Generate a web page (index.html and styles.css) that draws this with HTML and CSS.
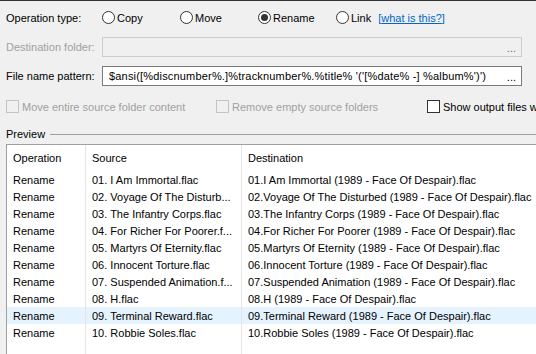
FILE: index.html
```html
<!DOCTYPE html>
<html lang="en">
<head>
    <meta charset="UTF-8">
    <title>File operations</title>
    <link rel="stylesheet" href="styles.css">
</head>
<body>
    <div class="options">
        <div class="row row-type">
            <span class="label">Operation type:</span>
            <span class="radio-item"><span class="radio"></span>Copy</span>
            <span class="radio-item"><span class="radio"></span>Move</span>
            <span class="radio-item"><span class="radio checked"></span>Rename</span>
            <span class="radio-item last"><span class="radio"></span>Link</span>
            <span class="help">[<a href="#">what is this?</a>]</span>
        </div>
        <div class="row row-field row-dest">
            <span class="label disabled">Destination folder:</span>
            <div class="field field-disabled">
                <span class="field-text"></span>
                <span class="dots">...</span>
            </div>
        </div>
        <div class="row row-field row-pattern">
            <span class="label">File name pattern:</span>
            <div class="field">
                <span class="field-text pattern">$ansi([%discnumber%.]%tracknumber%.%title% '('[%date% -] %album%')')</span>
                <span class="dots">...</span>
            </div>
        </div>
        <div class="row checks">
            <span class="check disabled"><span class="box"></span>Move entire source folder content</span>
            <span class="check disabled"><span class="box"></span>Remove empty source folders</span>
            <span class="check"><span class="box"></span>Show output files w</span>
        </div>
        <div class="row group-title">Preview</div>

        <div class="list">
            <div class="list-row list-head">
                <span class="cell">Operation</span>
                <span class="cell">Source</span>
                <span class="cell">Destination</span>
            </div>
            <div class="list-row">
                <span class="cell">Rename</span>
                <span class="cell">01. I Am Immortal.flac</span>
                <span class="cell">01.I Am Immortal (1989 - Face Of Despair).flac</span>
            </div>
            <div class="list-row">
                <span class="cell">Rename</span>
                <span class="cell">02. Voyage Of The Disturb...</span>
                <span class="cell">02.Voyage Of The Disturbed (1989 - Face Of Despair).flac</span>
            </div>
            <div class="list-row">
                <span class="cell">Rename</span>
                <span class="cell">03. The Infantry Corps.flac</span>
                <span class="cell">03.The Infantry Corps (1989 - Face Of Despair).flac</span>
            </div>
            <div class="list-row">
                <span class="cell">Rename</span>
                <span class="cell">04. For Richer For Poorer.f...</span>
                <span class="cell">04.For Richer For Poorer (1989 - Face Of Despair).flac</span>
            </div>
            <div class="list-row">
                <span class="cell">Rename</span>
                <span class="cell">05. Martyrs Of Eternity.flac</span>
                <span class="cell">05.Martyrs Of Eternity (1989 - Face Of Despair).flac</span>
            </div>
            <div class="list-row">
                <span class="cell">Rename</span>
                <span class="cell">06. Innocent Torture.flac</span>
                <span class="cell">06.Innocent Torture (1989 - Face Of Despair).flac</span>
            </div>
            <div class="list-row">
                <span class="cell">Rename</span>
                <span class="cell">07. Suspended Animation.f...</span>
                <span class="cell">07.Suspended Animation (1989 - Face Of Despair).flac</span>
            </div>
            <div class="list-row">
                <span class="cell">Rename</span>
                <span class="cell">08. H.flac</span>
                <span class="cell">08.H (1989 - Face Of Despair).flac</span>
            </div>
            <div class="list-row hover">
                <span class="cell">Rename</span>
                <span class="cell">09. Terminal Reward.flac</span>
                <span class="cell">09.Terminal Reward (1989 - Face Of Despair).flac</span>
            </div>
            <div class="list-row">
                <span class="cell">Rename</span>
                <span class="cell">10. Robbie Soles.flac</span>
                <span class="cell">10.Robbie Soles (1989 - Face Of Despair).flac</span>
            </div>
            <div class="list-row list-fill">
                <span class="cell"></span>
                <span class="cell"></span>
                <span class="cell"></span>
            </div>
        </div>
    </div>
</body>
</html>
```
FILE: styles.css
```css
html, body {
    height: 100%;
}
body {
    margin: 0;
    overflow: hidden;
    box-sizing: border-box;
    border-top: 1px solid #333;
    background-color: #f0f0f0;
    font-family: "Liberation Sans", Arial, sans-serif;
    font-size: 11px;
    color: #000;
}
.options {
    padding: 7px 0 0 6px;
}
.row {
    display: flex;
    align-items: center;
    white-space: nowrap;
}
.label {
    width: 96px;
    flex: none;
}
.disabled {
    color: #a0a0a0;
}

/* operation type */
.row-type {
    height: 19px;
}
.radio-item {
    display: flex;
    align-items: center;
    gap: 2px;
    width: 78px;
}
.radio-item.last {
    width: auto;
}
.radio {
    display: flex;
    align-items: center;
    justify-content: center;
    width: 13px;
    height: 13px;
    box-sizing: border-box;
    border: 1px solid #333;
    border-radius: 50%;
    background-color: #fff;
}
.radio.checked::after {
    content: "";
    width: 7px;
    height: 7px;
    border-radius: 50%;
    background-color: #333;
}
.help {
    margin-left: 7px;
    color: #0066cc;
}
.help a {
    color: #0066cc;
}

/* text fields */
.row-field {
    height: 20px;
}
.row-dest {
    margin-top: 10px;
}
.row-pattern {
    margin-top: 9px;
}
.field {
    display: flex;
    align-items: center;
    width: 420px;
    height: 20px;
    padding: 0 5px 0 6px;
    box-sizing: border-box;
    border: 1px solid #7a7a7a;
    background-color: #fff;
}
.field-disabled {
    border-color: #cccccc;
    background-color: #f0f0f0;
}
.field-disabled .dots {
    color: #6d6d6d;
}
.field-text {
    flex: 1;
    overflow: hidden;
}
.pattern {
    letter-spacing: 0.18px;
}
.dots {
    margin-left: 6px;
    padding-top: 2px;
}

/* checkboxes */
.checks {
    display: grid;
    grid-template-columns: 210px 211px auto;
    height: 13px;
    margin-top: 14px;
}
.check {
    display: flex;
    align-items: center;
    gap: 3px;
}
.box {
    width: 13px;
    height: 13px;
    flex: none;
    box-sizing: border-box;
    border: 1px solid #333;
    background-color: #fff;
}
.check.disabled .box {
    border-color: #c4c4c4;
    background-color: #f0f0f0;
}

/* preview */
.group-title {
    height: 13px;
    margin-top: 14px;
}
.group-title::after {
    content: "";
    flex: 1;
    height: 1px;
    margin: 1px 0 0 5px;
    background-color: #a0a0a0;
}
.list {
    display: flex;
    flex-direction: column;
    height: 209px;
    margin-top: 4px;
    border-top: 1px solid #a0a0a0;
    border-left: 1px solid #a0a0a0;
    background-color: #fff;
}
.list-row {
    display: grid;
    grid-template-columns: 79px 156px 1fr;
    height: 17px;
    flex: none;
}
.list-head {
    height: 26px;
}
.list-fill {
    flex: 1;
}
.cell {
    display: flex;
    align-items: center;
    padding-left: 6px;
    box-sizing: border-box;
    border-right: 1px solid #e5e5e5;
    overflow: hidden;
}
.cell:last-child {
    border-right: none;
}
.list-row.hover {
    background-color: #e5f3ff;
}
```
